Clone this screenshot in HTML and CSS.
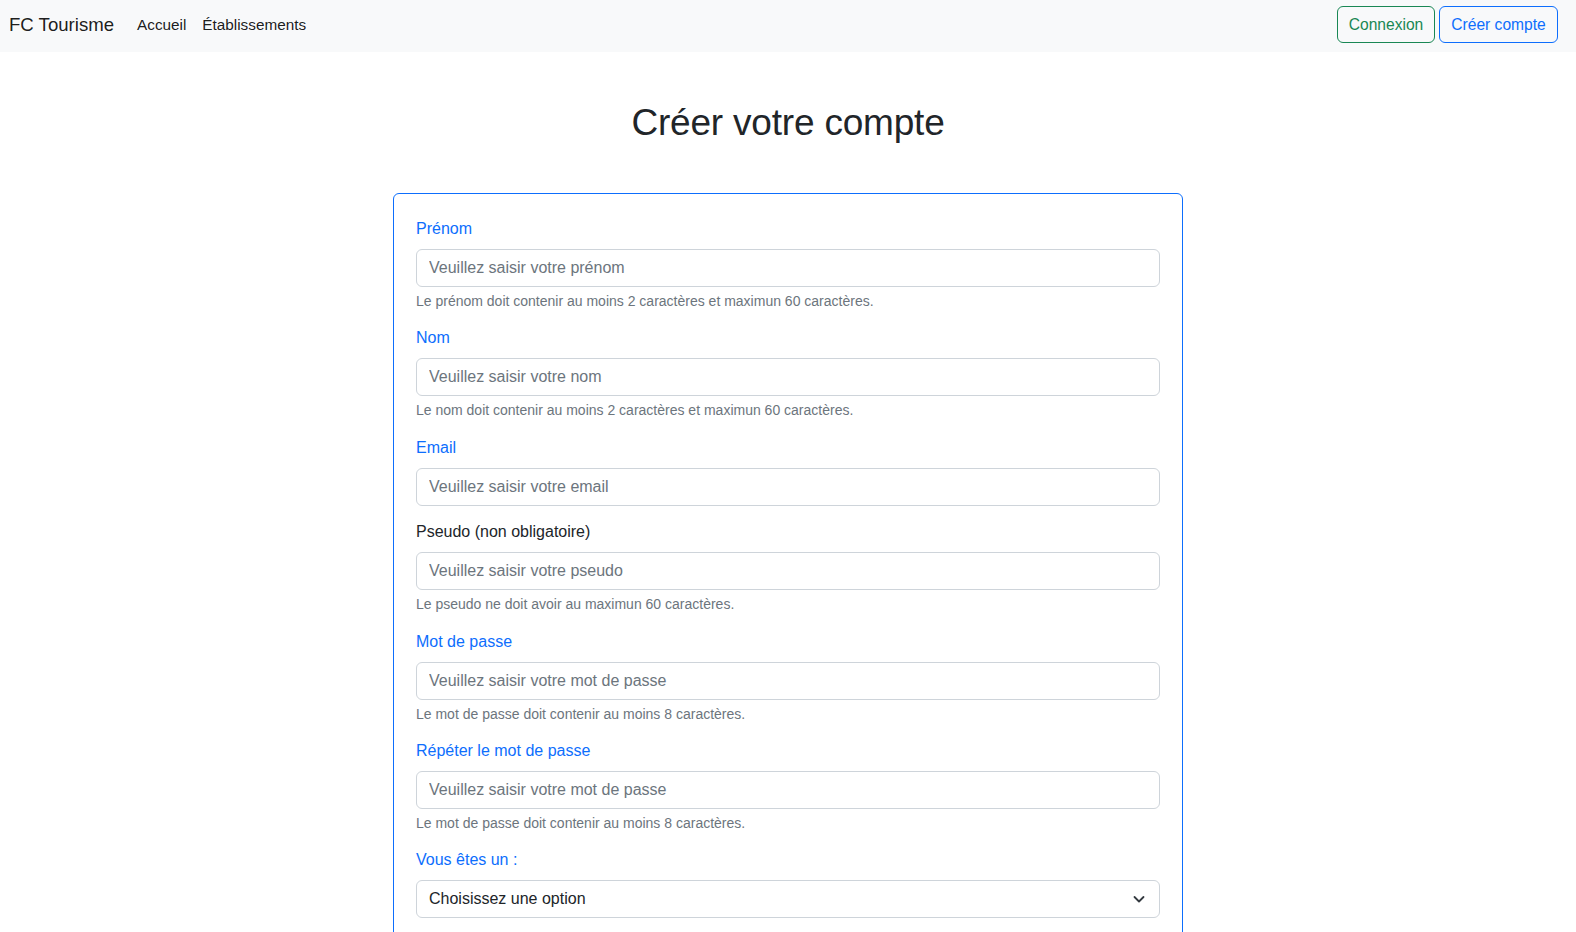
FILE: index.html
```html
<!DOCTYPE html>
<html lang="fr">
<head>
<meta charset="utf-8">
<title>Créer votre compte</title>
<link rel="stylesheet" href="styles.css">
</head>
<body>
<nav class="navbar">
  <div class="nav-left">
    <a class="brand" href="#">FC Tourisme</a>
    <ul class="nav-links">
      <li><a href="#">Accueil</a></li>
      <li><a href="#">Établissements</a></li>
    </ul>
  </div>
  <div class="nav-right">
    <a class="btn btn-green" href="#">Connexion</a>
    <a class="btn btn-blue" href="#">Créer compte</a>
  </div>
</nav>
<main class="main">
  <h1 class="title">Créer votre compte</h1>
  <form class="card">
    <div class="group">
      <label class="label req">Prénom</label>
      <input class="input" type="text" placeholder="Veuillez saisir votre prénom">
      <div class="help">Le prénom doit contenir au moins 2 caractères et maximun 60 caractères.</div>
    </div>
    <div class="group">
      <label class="label req">Nom</label>
      <input class="input" type="text" placeholder="Veuillez saisir votre nom">
      <div class="help">Le nom doit contenir au moins 2 caractères et maximun 60 caractères.</div>
    </div>
    <div class="group">
      <label class="label req">Email</label>
      <input class="input" type="text" placeholder="Veuillez saisir votre email">
    </div>
    <div class="group">
      <label class="label">Pseudo (non obligatoire)</label>
      <input class="input" type="text" placeholder="Veuillez saisir votre pseudo">
      <div class="help">Le pseudo ne doit avoir au maximun 60 caractères.</div>
    </div>
    <div class="group">
      <label class="label req">Mot de passe</label>
      <input class="input" type="password" placeholder="Veuillez saisir votre mot de passe">
      <div class="help">Le mot de passe doit contenir au moins 8 caractères.</div>
    </div>
    <div class="group">
      <label class="label req">Répéter le mot de passe</label>
      <input class="input" type="password" placeholder="Veuillez saisir votre mot de passe">
      <div class="help">Le mot de passe doit contenir au moins 8 caractères.</div>
    </div>
    <div class="group">
      <label class="label req">Vous êtes un :</label>
      <div class="select">
        <span>Choisissez une option</span>
        <svg class="chev" width="16" height="16" viewBox="0 0 16 16"><path d="M3.5 6l4.5 4.5L12.5 6" fill="none" stroke="#343a40" stroke-width="1.8" stroke-linecap="round" stroke-linejoin="round"/></svg>
      </div>
    </div>
  </form>
</main>
</body>
</html>
```
FILE: styles.css
```css
* { box-sizing: border-box; }
html, body { margin: 0; padding: 0; }
body {
  font-family: "Liberation Sans", Arial, sans-serif;
  font-size: 16px;
  line-height: 1.5;
  color: #212529;
  background: #fff;
}
a { text-decoration: none; }

.navbar {
  display: flex;
  justify-content: space-between;
  align-items: center;
  height: 52px;
  padding: 0 18px 0 9px;
  background: #f8f9fa;
}
.nav-left { display: flex; align-items: center; margin-bottom: 2px; }
.brand {
  font-size: 18.6px;
  color: rgba(0,0,0,.9);
  margin-right: 23px;
}
.nav-links { display: flex; list-style: none; margin: 0; padding: 0; gap: 16px; }
.nav-links a { color: rgba(0,0,0,.9); font-size: 15.3px; }
.nav-right { display: flex; gap: 4px; margin-bottom: 3px; }
.btn {
  display: inline-block;
  height: 37px;
  line-height: 35px;
  border-radius: 6px;
  border: 1px solid;
  font-size: 15.6px;
  background: transparent;
  text-align: center;
  padding: 0;
}
.btn-green { color: #198754; border-color: #198754; width: 98px; }
.btn-blue { color: #0d6efd; border-color: #0d6efd; width: 119px; }

.main { display: flex; flex-direction: column; align-items: center; }
.title {
  font-size: 37px;
  font-weight: 400;
  line-height: 44px;
  margin: 0;
  padding-top: 49px;
  height: 141px;
  letter-spacing: -0.2px;
}
.card {
  width: 790px;
  border: 1px solid #0d6efd;
  border-radius: 6px;
  padding: 23px 22px 22px;
}
.group { margin-bottom: 14.4px; }
.label {
  display: block;
  margin-bottom: 8px;
  line-height: 24px;
  color: #212529;
}
.label.req { color: #0d6efd; }
.input, .select {
  display: block;
  width: 100%;
  height: 38px;
  padding: 0 12px;
  font-family: inherit;
  font-size: 16px;
  color: #212529;
  border: 1px solid #ced4da;
  border-radius: 6px;
  background: #fff;
  outline: none;
}
.input::placeholder { color: #6c757d; opacity: 1; }
.select { display: flex; align-items: center; justify-content: space-between; padding-right: 12px; }
.help {
  margin-top: 4px;
  font-size: 14px;
  line-height: 21px;
  color: #6c757d;
}
```
